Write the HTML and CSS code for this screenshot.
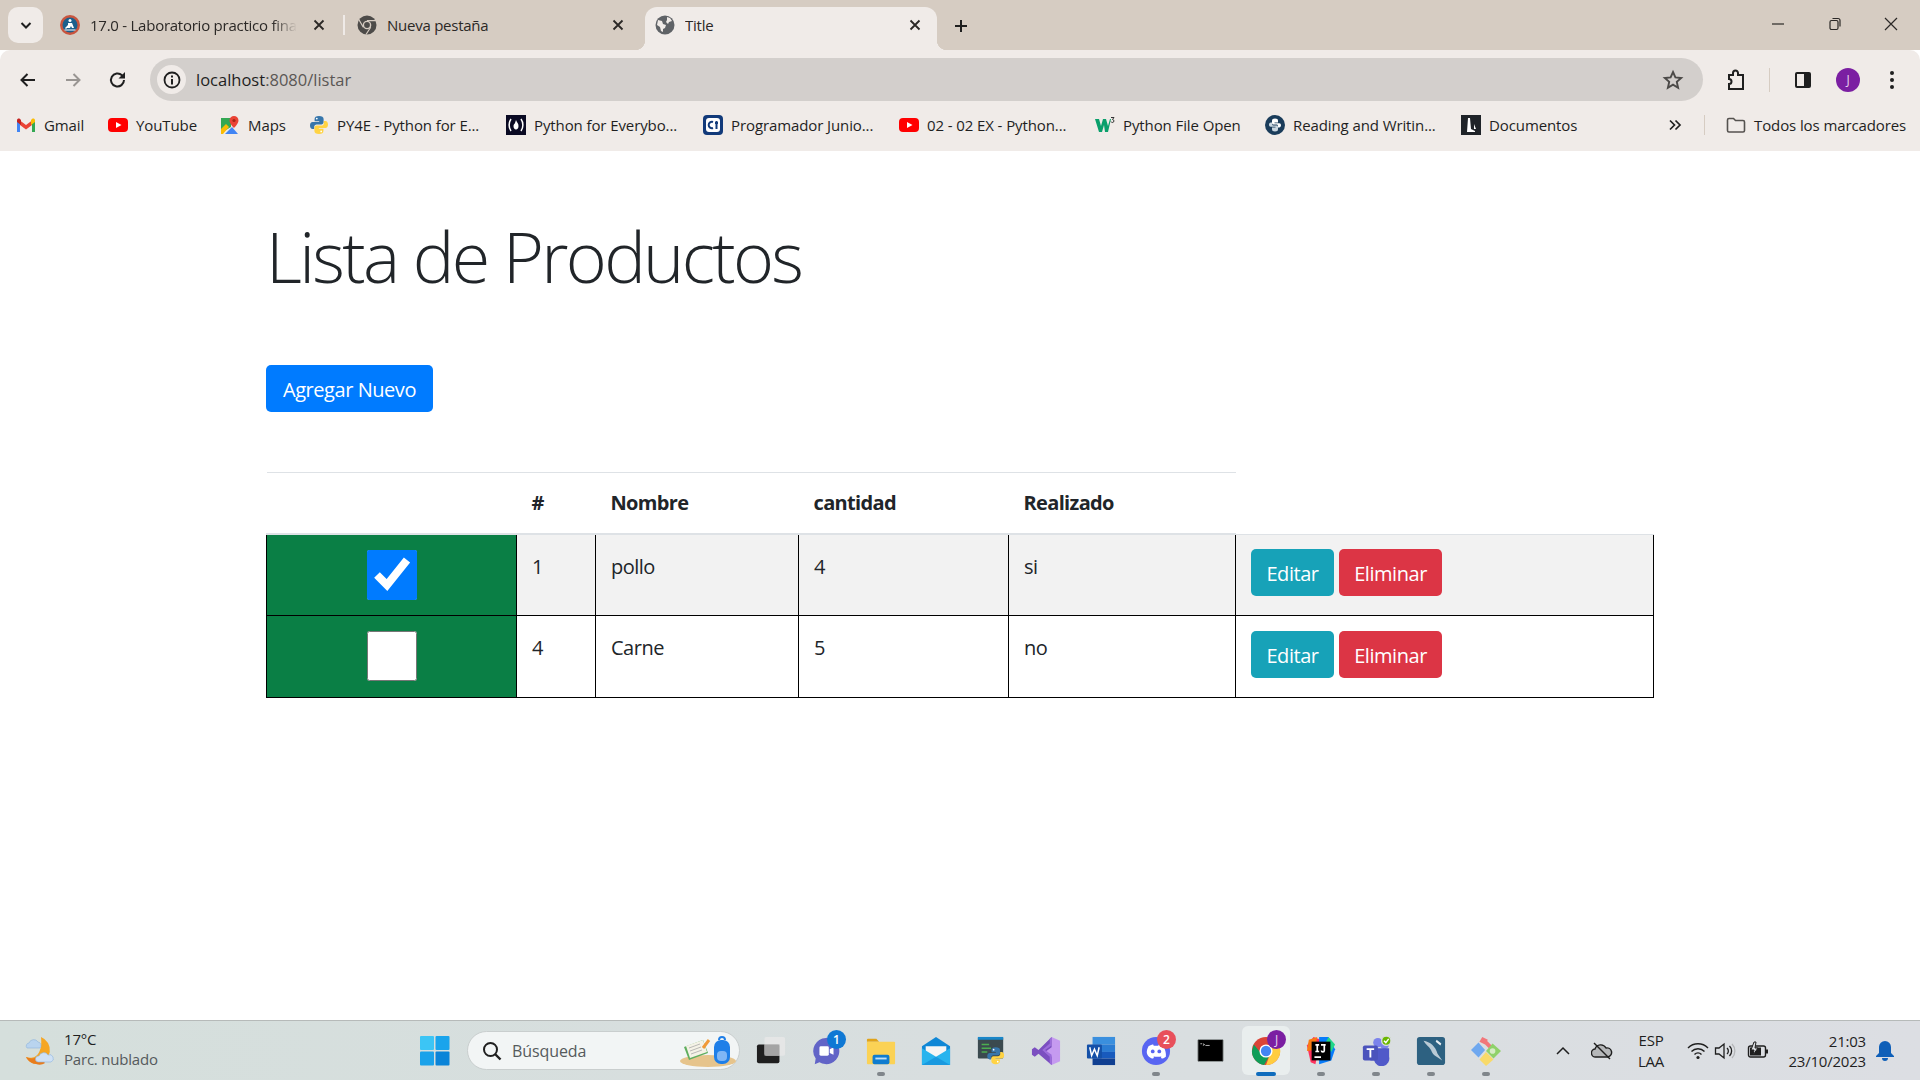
FILE: index.html
```html
<!DOCTYPE html>
<html lang="en">
<head>
    <meta charset="UTF-8">
    <meta name="viewport" content="width=device-width, initial-scale=1.0">
    <title>Title</title>
    <link rel="stylesheet" href="styles.css">
</head>

<body>
    <svg class="defs" width="0" height="0">
        <symbol id="python" viewBox="0 0 20 20">
            <path fill="#3776ab" d="M10 1C7 1 5.6 2 5.6 4v2.2h4.6V7H3.6C2 7 1 8.4 1 10.4S2 14 3.6 14h1.6v-2.2c0-1.4 1-2.4 2.4-2.4h4.8c1.2 0 2.2-1 2.2-2.2V4C14.600 2 13 1 10 1z"/>
            <path fill="#ffd343" d="M10 19c3 0 4.400-1 4.400-3v-2.200H9.800V13h6.600c1.600 0 2.600-1.400 2.600-3.400S18 6 16.400 6h-1.600v2.200c0 1.400-1 2.400-2.400 2.400H7.600c-1.200 0-2.200 1-2.200 2.200V16c0 2 1.600 3 4.600 3z"/>
            <circle cx="7.800" cy="3.600" r=".9" fill="#fff"/>
            <circle cx="12.200" cy="16.400" r=".9" fill="#fff"/>
        </symbol>
        <symbol id="youtube" viewBox="0 0 20 20">
            <rect x="0" y="3" width="20" height="14" rx="4" fill="#f00"/>
            <path fill="#fff" d="M8 7l5.500 3L8 13z"/>
        </symbol>
        <symbol id="close" viewBox="0 0 16 16">
            <path fill="none" stroke="#2b2826" stroke-width="1.800" d="M3.500 3.500l9 9M12.500 3.500l-9 9"/>
        </symbol>
    </svg>

    <div class="tabstrip">
        <div class="tab-search">
            <svg width="14" height="14" viewBox="0 0 14 14"><path fill="none" stroke="#1f1f1f" stroke-width="2" d="M2.500 5l4.500 4.500L11.500 5"/></svg>
        </div>
        <div class="tab tab-first">
            <svg class="favicon" viewBox="0 0 20 20">
                <circle cx="10" cy="10" r="10" fill="#c8553f"/>
                <circle cx="10" cy="10" r="7.500" fill="#1d5f8c"/>
                <circle cx="10" cy="5.500" r="1.500" fill="#fff"/>
                <path fill="#fff" d="M8 8h4l2 5h-2l-1-2-1 2H7l-1 1-1-1 3-3zM4.500 14.500h11v1h-11z"/>
            </svg>
            <span class="tab-title tab-title-fade">17.0 - Laboratorio practico fina</span>
            <svg class="tab-close"><use href="#close"/></svg>
        </div>
        <div class="tab-divider"></div>
        <div class="tab tab-second">
            <svg class="favicon" viewBox="0 0 20 20">
                <circle cx="10" cy="10" r="9.500" fill="#4d4b49"/>
                <circle cx="10" cy="10" r="4.300" fill="#d6ccc2"/>
                <circle cx="10" cy="10" r="2.900" fill="#4d4b49"/>
                <path fill="none" stroke="#d6ccc2" stroke-width="1.200" d="M10 5.700h9M6.300 12.200L1.800 4.500M13.700 12.200L9 19.500"/>
            </svg>
            <span class="tab-title">Nueva pestaña</span>
            <svg class="tab-close"><use href="#close"/></svg>
        </div>
        <div class="tab tab-active">
            <svg class="favicon" viewBox="0 0 20 20">
                <circle cx="10" cy="10" r="9.500" fill="#5f6266"/>
                <path fill="#f0ebe8" d="M3 5l4 1 1 3 3 1-1 3-2 1v3l-2-1-1-4-3-2zM12 2l3 1 2 3-3 1-1 2-2-2 1-2z"/>
            </svg>
            <span class="tab-title">Title</span>
            <svg class="tab-close"><use href="#close"/></svg>
        </div>
        <div class="tab-new">
            <svg width="14" height="14" viewBox="0 0 14 14"><path stroke="#1f1f1f" stroke-width="2" d="M7 1v12M1 7h12"/></svg>
        </div>
        <div class="window-controls">
            <svg width="14" height="14" viewBox="0 0 14 14"><path stroke="#2b2826" stroke-width="1.200" d="M1 7h12"/></svg>
            <svg width="14" height="14" viewBox="0 0 14 14"><rect x="2" y="3.500" width="8" height="9" rx="1.500" fill="none" stroke="#2b2826" stroke-width="1.200"/><path fill="none" stroke="#2b2826" stroke-width="1.200" d="M4.500 1.500h5.500a2 2 0 0 1 2 2v6"/></svg>
            <svg width="14" height="14" viewBox="0 0 14 14"><path stroke="#2b2826" stroke-width="1.200" d="M1 1l12 12M13 1L1 13"/></svg>
        </div>
    </div>

    <div class="toolbar">
        <button class="nav-btn">
            <svg width="20" height="20" viewBox="0 0 20 20"><path fill="none" stroke="#1f1f1f" stroke-width="2" d="M17 10H4M9.500 4l-6 6 6 6"/></svg>
        </button>
        <button class="nav-btn">
            <svg width="20" height="20" viewBox="0 0 20 20"><path fill="none" stroke="#999592" stroke-width="2" d="M3 10h13M10.500 4l6 6-6 6"/></svg>
        </button>
        <button class="nav-btn">
            <svg width="20" height="20" viewBox="0 0 20 20"><path fill="none" stroke="#1f1f1f" stroke-width="2" d="M16 10a6.500 6.500 0 1 1-2-4.700L16 7"/><path fill="#1f1f1f" d="M17 2v6.500h-6.500z"/></svg>
        </button>
        <div class="omnibox">
            <div class="site-info">
                <svg width="18" height="18" viewBox="0 0 18 18"><circle cx="9" cy="9" r="7.500" fill="none" stroke="#1f1f1f" stroke-width="1.800"/><path stroke="#1f1f1f" stroke-width="2" d="M9 8v5.500M9 4.500v2"/></svg>
            </div>
            <span class="url">localhost<span class="url-path">:8080/listar</span></span>
            <svg class="star" width="22" height="22" viewBox="0 0 22 22"><path fill="none" stroke="#4c4a48" stroke-width="1.900" d="M11 3l2.400 5.400 5.800.6-4.400 3.900 1.300 5.800-5.100-3-5.100 3 1.300-5.800L2.800 9l5.800-.6z"/></svg>
        </div>
        <div class="toolbar-btn">
            <svg width="22" height="22" viewBox="0 0 22 22"><path fill="none" stroke="#1f1f1f" stroke-width="2" d="M4 6h4V4a2.500 2.500 0 0 1 5 0v2h5v14H4v-5a2.500 2.500 0 0 0 0-5z"/></svg>
        </div>
        <div class="toolbar-sep"></div>
        <div class="toolbar-btn">
            <svg width="20" height="20" viewBox="0 0 20 20"><rect x="2" y="2" width="16" height="16" rx="2" fill="#1f1f1f"/><rect x="4" y="4" width="7" height="12" fill="#f0ebe8"/></svg>
        </div>
        <div class="avatar">J</div>
        <div class="toolbar-menu">
            <svg width="6" height="20" viewBox="0 0 6 20"><circle cx="3" cy="3" r="2" fill="#1f1f1f"/><circle cx="3" cy="10" r="2" fill="#1f1f1f"/><circle cx="3" cy="17" r="2" fill="#1f1f1f"/></svg>
        </div>
    </div>

    <div class="bookmarks">
        <div class="bookmark">
            <svg class="bm-icon" viewBox="0 0 20 20">
                <path fill="#4285f4" d="M1 17V5l3 1.500V17z"/>
                <path fill="#34a853" d="M16 17V6.500L19 5v12z"/>
                <path fill="#ea4335" d="M4 10V5.500L10 10l6-4.500V10l-6 4.500z"/>
                <path fill="#c5221f" d="M1 5.500C1 3.500 3 3 4 4l1 1v5L1 7z"/>
                <path fill="#fbbc04" d="M19 5.500c0-2-2-2.500-3-1.500l-1 1v5l4-3z"/>
            </svg>
            <span>Gmail</span>
        </div>
        <div class="bookmark"><svg class="bm-icon"><use href="#youtube"/></svg><span>YouTube</span></div>
        <div class="bookmark">
            <svg class="bm-icon" viewBox="0 0 20 20">
                <path fill="#34a853" d="M1 3h10v9L1 18z"/>
                <path fill="#4285f4" d="M5 19l7-7 6 7z"/>
                <path fill="#fbbc04" d="M1 14l5-5 3 3-6 7H1z"/>
                <path fill="#ea4335" d="M14 1a4.500 4.500 0 0 1 4.500 4.500c0 3-4.500 7.500-4.500 7.500S9.500 8.500 9.500 5.500A4.500 4.500 0 0 1 14 1z"/>
                <circle cx="14" cy="5.500" r="1.600" fill="#a52714"/>
            </svg>
            <span>Maps</span>
        </div>
        <div class="bookmark"><svg class="bm-icon"><use href="#python"/></svg><span>PY4E - Python for E...</span></div>
        <div class="bookmark">
            <svg class="bm-icon" viewBox="0 0 20 20">
                <rect width="20" height="20" fill="#0a0a23"/>
                <path fill="none" stroke="#fff" stroke-width="1.500" d="M5 4c-2.500 3.500-2.500 8.500 0 12M15 4c2.500 3.500 2.500 8.500 0 12"/>
                <path fill="#fff" d="M10 5c1 2.500 2.500 3.500 2.500 6 0 2-1 3.500-2.500 3.500S7.500 13 7.500 11c0-1.500 1-2 1.500-3z"/>
            </svg>
            <span>Python for Everybo...</span>
        </div>
        <div class="bookmark">
            <svg class="bm-icon" viewBox="0 0 20 20">
                <rect width="20" height="20" rx="4" fill="#123a7a"/>
                <rect x="3" y="3" width="14" height="14" rx="3" fill="#fff"/>
                <path fill="none" stroke="#123a7a" stroke-width="2" d="M10 7a3.200 3.200 0 1 0 0 6M13.500 6v8M12 8h3"/>
            </svg>
            <span>Programador Junio...</span>
        </div>
        <div class="bookmark"><svg class="bm-icon"><use href="#youtube"/></svg><span>02 - 02 EX - Python...</span></div>
        <div class="bookmark">
            <svg class="bm-icon" viewBox="0 0 20 20">
                <path fill="#0a9f6b" d="M0 4h4l2 7 2-7h3l2 7 2-7h1l-3 13h-3L9 10l-2 7H4z"/>
                <path fill="none" stroke="#333" stroke-width="1" d="M16 2.500h3l-1.500 2a1.500 1.500 0 1 1-1.500 2"/>
            </svg>
            <span>Python File Open</span>
        </div>
        <div class="bookmark">
            <svg class="bm-icon" viewBox="0 0 20 20">
                <circle cx="10" cy="10" r="10" fill="#1a3c5a"/>
                <path fill="#fff" d="M10 3.500c2 0 3 .8 3 2.200v1.800H9.500v.8h4.800c1 0 1.700.8 1.700 2s-.7 2.200-1.700 2.200H13V11c0-.9-.6-1.500-1.500-1.500h-3c-1 0-1.500-.7-1.500-1.500V5.700c0-1.400 1-2.200 3-2.200z"/>
                <path fill="#c9d6e0" d="M10 16.500c-2 0-3-.8-3-2.200v-1.800h3.500v-.8H5.700c-1 0-1.700-.8-1.700-2s.7-2.200 1.700-2.200H7V9c0 .9.600 1.500 1.500 1.500h3c1 0 1.500.7 1.500 1.500v2.300c0 1.400-1 2.200-3 2.200z"/>
            </svg>
            <span>Reading and Writin...</span>
        </div>
        <div class="bookmark">
            <svg class="bm-icon" viewBox="0 0 20 20">
                <rect width="20" height="20" fill="#1f2328"/>
                <path fill="#fff" d="M7 3h2l1 11 4 2v1H6zM13 9l2 5h-2z"/>
            </svg>
            <span>Documentos</span>
        </div>
        <div class="bm-more">
            <svg width="14" height="14" viewBox="0 0 14 14"><path fill="none" stroke="#1f1f1f" stroke-width="1.700" d="M2 2.500L6.500 7 2 11.500M7.500 2.500L12 7l-4.500 4.500"/></svg>
        </div>
        <div class="bm-sep"></div>
        <div class="bookmark bm-all">
            <svg class="bm-icon" viewBox="0 0 20 20"><path fill="none" stroke="#55524f" stroke-width="1.600" d="M1.500 5a1.500 1.500 0 0 1 1.500-1.500h4.500l2 2H17A1.500 1.500 0 0 1 18.500 7v8.500A1.500 1.500 0 0 1 17 17H3a1.500 1.500 0 0 1-1.500-1.500z"/></svg>
            <span>Todos los marcadores</span>
        </div>
    </div>

    <main class="page">
        <h1 class="page-title">Lista de Productos</h1>
        <a class="btn btn-primary btn-add">Agregar Nuevo</a>

        <table class="products">
            <colgroup>
                <col class="col-check">
                <col class="col-id">
                <col class="col-name">
                <col class="col-qty">
                <col class="col-done">
                <col>
            </colgroup>
            <thead>
                <tr>
                    <th></th>
                    <th>#</th>
                    <th>Nombre</th>
                    <th>cantidad</th>
                    <th>Realizado</th>
                    <td class="head-empty"></td>
                </tr>
            </thead>
            <tbody>
                <tr class="row-odd">
                    <td class="cell-check"><input type="checkbox" checked></td>
                    <td>1</td>
                    <td>pollo</td>
                    <td>4</td>
                    <td>si</td>
                    <td class="cell-actions">
                        <div class="actions">
                            <a class="btn btn-info">Editar</a>
                            <a class="btn btn-danger">Eliminar</a>
                        </div>
                    </td>
                </tr>
                <tr>
                    <td class="cell-check"><input type="checkbox"></td>
                    <td>4</td>
                    <td>Carne</td>
                    <td>5</td>
                    <td>no</td>
                    <td class="cell-actions">
                        <div class="actions">
                            <a class="btn btn-info">Editar</a>
                            <a class="btn btn-danger">Eliminar</a>
                        </div>
                    </td>
                </tr>
            </tbody>
        </table>
    </main>

    <footer class="taskbar">
        <div class="weather">
            <svg width="34" height="34" viewBox="0 0 34 34">
                <path fill="#f5a623" d="M17 3a14 14 0 0 1-4 27C8 30 4 27 2 23c8 3 17-2 15-20z"/>
                <path fill="#e87d1e" d="M2 23c4 2 9 2 13-1l6 7c-3 2-6 2-9 1-4 0-8-3-10-7z"/>
                <path fill="#b9d4ef" stroke="#8fb4dc" stroke-width=".6" d="M3 14a3 3 0 0 1 2-5 5 5 0 0 1 9-1 3.500 3.500 0 0 1 2 6z"/>
                <path fill="#cfe1f5" stroke="#8fb4dc" stroke-width=".6" d="M14 28a3 3 0 0 1 1-6 5 5 0 0 1 9-1 3.500 3.500 0 0 1 3 7z"/>
            </svg>
            <div class="weather-text">
                <span class="weather-temp">17°C</span>
                <span class="weather-desc">Parc. nublado</span>
            </div>
        </div>

        <div class="start">
            <svg width="30" height="30" viewBox="0 0 30 30">
                <rect x="0" y="0" width="14" height="14" rx="1" fill="#3cc5f5"/>
                <rect x="15.500" y="0" width="14" height="14" rx="1" fill="#19a4ec"/>
                <rect x="0" y="15.500" width="14" height="14" rx="1" fill="#1aa2ea"/>
                <rect x="15.500" y="15.500" width="14" height="14" rx="1" fill="#0a84d8"/>
            </svg>
        </div>

        <div class="search">
            <svg width="20" height="20" viewBox="0 0 20 20"><circle cx="8.500" cy="8.500" r="6.500" fill="none" stroke="#1f1f1f" stroke-width="2"/><path stroke="#1f1f1f" stroke-width="2.400" d="M13 13l5.500 5.500"/></svg>
            <span class="search-text">Búsqueda</span>
            <svg class="search-art" width="58" height="34" viewBox="0 0 58 34">
                <ellipse cx="30" cy="27" rx="28" ry="6" fill="#e6c48c"/>
                <path fill="#5fae5f" d="M6 13l19-7 5 13-19 7z"/>
                <path fill="#f4f2e6" d="M8 12l17-6 4 12-17 6z"/>
                <path stroke="#aaa" stroke-width=".8" d="M11 14l11-4M12 17l11-4M13 20l11-4"/>
                <path stroke="#f09a37" stroke-width="3" d="M25 14l6-8"/>
                <rect x="36" y="6" width="16" height="24" rx="7" fill="#1f7fe8"/>
                <rect x="39" y="17" width="10" height="10" rx="4" fill="#7fb6f5"/>
                <path fill="none" stroke="#1f7fe8" stroke-width="2" d="M41 6a3 3 0 0 1 6 0"/>
            </svg>
        </div>

        <div class="task-icons">
            <div class="task-cell">
                <svg class="task-icon" viewBox="0 0 32 32">
                    <rect x="1" y="9" width="24" height="20" rx="2" fill="#1f1f1f"/>
                    <rect x="9" y="1" width="22" height="20" rx="2" fill="#e8e8e8" opacity=".85"/>
                    <rect x="9" y="9" width="16" height="12" fill="#9b9b9b" opacity=".8"/>
                </svg>
            </div>
            <div class="task-cell">
                <svg class="task-icon" viewBox="0 0 32 32">
                    <path fill="#6264c7" d="M16 2a14 14 0 1 1-7 26l-5 2 1-6A14 14 0 0 1 16 2z"/>
                    <rect x="9" y="11" width="10" height="10" rx="1.500" fill="#fff"/>
                    <path fill="#fff" d="M20 14l4-2v8l-4-2z"/>
                </svg>
                <span class="badge badge-blue">1</span>
            </div>
            <div class="task-cell">
                <svg class="task-icon" viewBox="0 0 32 32">
                    <path fill="#e0a31a" d="M1 4a1 1 0 0 1 1-1h9l3 3h-13z"/>
                    <rect x="1" y="6" width="30" height="24" rx="1" fill="#fbd255"/>
                    <rect x="7" y="20" width="18" height="10" rx="2" fill="#0f7ccf"/>
                    <rect x="10" y="23" width="12" height="2" fill="#bfe0f7"/>
                </svg>
                <span class="task-dot"></span>
            </div>
            <div class="task-cell">
                <svg class="task-icon" viewBox="0 0 32 32">
                    <path fill="#0f87d6" d="M1 11L16 1l15 10v20H1z"/>
                    <path fill="#f5f5f5" d="M5 11h22v6l-11 6-11-6z"/>
                    <path fill="#28b4ee" d="M1 13l15 9 15-9v18H1z"/>
                    <path fill="#0f87d6" d="M1 31l15-9 15 9z" opacity=".6"/>
                </svg>
            </div>
            <div class="task-cell">
                <svg class="task-icon" viewBox="0 0 32 32">
                    <rect x="2" y="1" width="27" height="23" rx="1" fill="#3b4a4f"/>
                    <rect x="2" y="1" width="27" height="3" fill="#1a86c8"/>
                    <path stroke="#4caf50" stroke-width="1.500" d="M6 9h8M6 13h10M6 17h6"/>
                    <svg x="11" y="11" width="20" height="20" viewBox="0 0 20 20"><use href="#python"/></svg>
                </svg>
            </div>
            <div class="task-cell">
                <svg class="task-icon" viewBox="0 0 32 32">
                    <path fill="#c59af0" d="M22 1l9 4v22l-9 4-12-12 12-9z"/>
                    <path fill="#7b4fc0" d="M22 1L8 15l-4-3-3 2v6l3 2 4-3 14 12v-9l-7-5 7-5z"/>
                    <path fill="#9c6cdb" d="M22 1v9l-7 5 7 5v11l-2-2V22l-8-7 8-7V3z"/>
                </svg>
            </div>
            <div class="task-cell">
                <svg class="task-icon" viewBox="0 0 32 32">
                    <rect x="7" y="1" width="24" height="8" fill="#3a8fde"/>
                    <rect x="7" y="9" width="24" height="8" fill="#2b7cd3"/>
                    <rect x="7" y="17" width="24" height="7" fill="#185abd"/>
                    <rect x="7" y="24" width="24" height="7" fill="#103f91"/>
                    <rect x="1" y="9" width="16" height="15" rx="1" fill="#1450a8"/>
                    <path fill="none" stroke="#fff" stroke-width="1.600" d="M4 12l2 9 3-7 3 7 2-9"/>
                </svg>
            </div>
            <div class="task-cell">
                <svg class="task-icon" viewBox="0 0 32 32">
                    <circle cx="16" cy="16" r="15" fill="#5865f2"/>
                    <path fill="#fff" d="M8 11c2-1.500 4-2 5-2l.6 1.300h4.800L19 9c1 0 3 .5 5 2 2 4 3 8 2.500 11-1.500 1.300-3.500 2-4.500 2l-1-1.800 1.500-1c-3 1.300-7 1.300-10 0l1.500 1-1 1.800c-1 0-3-.7-4.500-2C5 19 6 15 8 11z"/>
                    <circle cx="12.500" cy="16.500" r="2" fill="#5865f2"/>
                    <circle cx="19.500" cy="16.500" r="2" fill="#5865f2"/>
                </svg>
                <span class="badge badge-red">2</span>
                <span class="task-dot"></span>
            </div>
            <div class="task-cell">
                <svg class="task-icon task-icon-small" viewBox="0 0 32 32">
                    <rect x="1" y="3" width="30" height="26" rx="1" fill="#000" stroke="#9aa0a0"/>
                    <path stroke="#d0d0d0" d="M4 8h2M7 8l2 1-2 1M10 10h5"/>
                </svg>
            </div>
            <div class="task-cell task-cell-active">
                <svg class="task-icon" viewBox="0 0 32 32">
                    <circle cx="16" cy="16" r="15" fill="#db4437"/>
                    <path fill="#0f9d58" d="M3 9L1 16a15 15 0 0 0 13 15l5-9-6-1z"/>
                    <path fill="#ffcd40" d="M30 10H16l6 5-6 16a15 15 0 0 0 14-21z"/>
                    <circle cx="16" cy="16" r="7" fill="#fff"/>
                    <circle cx="16" cy="16" r="5.500" fill="#4285f4"/>
                </svg>
                <span class="badge badge-user">J</span>
                <span class="task-bar"></span>
            </div>
            <div class="task-cell">
                <svg class="task-icon" viewBox="0 0 32 32">
                    <path fill="#fe315d" d="M1 10l7-9 8 3-6 26-5-2z"/>
                    <path fill="#f97a12" d="M3 4l9-3-3 14-8 1z"/>
                    <path fill="#087cfa" d="M14 1h10l7 13-4 12-13 4z"/>
                    <path fill="#21d789" d="M24 1l7 8-4 8-6-10z"/>
                    <rect x="6" y="6" width="20" height="20" fill="#000"/>
                    <path stroke="#fff" stroke-width="1.800" d="M10 9.500h4M12 9.500v7M10 16.500h4M16 9.500h5M19.500 9.500v6a1.500 1.500 0 0 1-3 0M9 22.500h7"/>
                </svg>
                <span class="task-dot"></span>
            </div>
            <div class="task-cell">
                <svg class="task-icon" viewBox="0 0 32 32">
                    <circle cx="25" cy="9" r="5" fill="#7b83eb"/>
                    <circle cx="18" cy="7" r="5" fill="#7b83eb"/>
                    <path fill="#5059c9" d="M10 13h20v9a8 8 0 0 1-16 4h-4z"/>
                    <rect x="2" y="10" width="16" height="16" rx="2" fill="#4b53bc"/>
                    <path stroke="#fff" stroke-width="2" d="M6 14h8M10 14v9"/>
                    <circle cx="27" cy="5" r="5" fill="#6bb700" stroke="#d8dcdc" stroke-width="1.500"/>
                    <path fill="none" stroke="#fff" stroke-width="1.500" d="M24.500 5l2 2 3-4"/>
                </svg>
                <span class="task-dot"></span>
            </div>
            <div class="task-cell">
                <svg class="task-icon" viewBox="0 0 32 32">
                    <rect x="1" y="1" width="30" height="30" rx="3" fill="#2d6181"/>
                    <path fill="#e8eef2" d="M8 5c7 1 13 6 15 14l5 7-6-4c-3-1-5-4-6-7C14 11 10 9 8 5z" opacity=".75"/>
                    <path fill="#e8eef2" d="M22 4l5 4-1 2-5-4z"/>
                </svg>
                <span class="task-dot"></span>
            </div>
            <div class="task-cell">
                <svg class="task-icon" viewBox="0 0 32 32">
                    <path fill="#f2767a" d="M12 1l6 3-3 5-6-3zM17 5l5 5-3 3-5-5z"/>
                    <path fill="#6fa8ef" d="M8 7l7 8-7 8-8-8z"/>
                    <path fill="#8fd16a" d="M23 8l9 8-8 8-8-8z"/>
                    <circle cx="23" cy="16" r="3" fill="#d6ecc6"/>
                    <path fill="#f8da6a" d="M16 17l8 8-8 7-7-7z"/>
                </svg>
                <span class="task-dot"></span>
            </div>
        </div>

        <div class="tray">
            <svg class="tray-chevron" width="16" height="16" viewBox="0 0 16 16"><path fill="none" stroke="#1f1f1f" stroke-width="1.500" d="M2 11l6-6 6 6"/></svg>
            <svg class="tray-cloud" width="22" height="22" viewBox="0 0 22 22"><path fill="#b5b7b9" stroke="#1f1f1f" stroke-width="1.400" d="M5 17a4 4 0 0 1-1-8 6 6 0 0 1 11-1 4.500 4.500 0 0 1 2 9z"/><path stroke="#1f1f1f" stroke-width="1.400" d="M3 3l16 16"/></svg>
            <div class="tray-lang"><span>ESP</span><span>LAA</span></div>
            <svg class="tray-wifi" width="22" height="20" viewBox="0 0 22 20"><path fill="none" stroke="#1f1f1f" stroke-width="1.400" d="M1 7a14 14 0 0 1 20 0M4.500 10.500a9 9 0 0 1 13 0M7.500 13.500a5 5 0 0 1 7 0"/><circle cx="11" cy="16.500" r="1.600" fill="#1f1f1f"/></svg>
            <svg class="tray-sound" width="22" height="20" viewBox="0 0 22 20"><path fill="none" stroke="#1f1f1f" stroke-width="1.300" d="M1.500 7v6h3.500l5 4V3l-5 4zM13 7a4 4 0 0 1 0 6M15.500 5a7 7 0 0 1 0 10"/><path fill="none" stroke="#b4b6b8" stroke-width="1.300" d="M18 3a10 10 0 0 1 0 14"/></svg>
            <svg class="tray-battery" width="22" height="20" viewBox="0 0 22 20"><rect x="1.500" y="5" width="17" height="11" rx="2" fill="none" stroke="#1f1f1f" stroke-width="1.400"/><rect x="3" y="6.500" width="11" height="8" fill="#1f1f1f"/><rect x="19" y="8.500" width="2" height="4" fill="#1f1f1f"/><path fill="#dcdee2" stroke="#1f1f1f" d="M7 1L4 9h3l-1 5 5-7H8l1-6z"/></svg>
            <div class="tray-clock"><span>21:03</span><span>23/10/2023</span></div>
            <svg class="tray-bell" width="18" height="22" viewBox="0 0 18 22"><path fill="#0f5fb8" d="M9 1a6 6 0 0 1 6 6v6l3 3v1H0v-1l3-3V7a6 6 0 0 1 6-6zM6 18h6a3 3 0 0 1-6 0z"/></svg>
        </div>
    </footer>
</body>
</html>
```

FILE: styles.css
```css
* {
    box-sizing: border-box;
}

body, html {
    margin: 0;
    padding: 0;
    height: 100%;
    overflow: hidden;
    font-family: "Open Sans", Arial, sans-serif;
    background-color: #ffffff;
    color: #212529;
}

body {
    display: flex;
    flex-direction: column;
    height: 1080px;
}

.defs {
    position: absolute;
}

/* browser tabs */
.tabstrip {
    display: flex;
    align-items: flex-end;
    height: 50px;
    flex-shrink: 0;
    padding-left: 8px;
    background-color: #d6ccc2;
    font-size: 15px;
    letter-spacing: -0.25px;
    color: #2b2826;
}

.tab-search {
    display: flex;
    align-items: center;
    justify-content: center;
    width: 35px;
    height: 36px;
    margin: 0 7px 7px 0;
    background-color: #f0ebe8;
    border-radius: 10px;
}

.tab {
    display: flex;
    align-items: center;
    height: 43px;
    padding: 0 16px 7px 10px;
}

.tab-first {
    width: 293px;
}

.tab-second {
    width: 300px;
    padding-left: 12px;
    padding-right: 19px;
}

.tab-active {
    position: relative;
    width: 292px;
    padding-right: 14px;
    background-color: #f0ebe8;
    border-radius: 12px 12px 0 0;
}

.tab-active::before,
.tab-active::after {
    content: "";
    position: absolute;
    bottom: 0;
    width: 10px;
    height: 10px;
}

.tab-active::before {
    left: -10px;
    background: radial-gradient(circle at 0 0, #d6ccc2 10px, #f0ebe8 10.5px);
}

.tab-active::after {
    right: -10px;
    background: radial-gradient(circle at 100% 0, #d6ccc2 10px, #f0ebe8 10.5px);
}

.tab-divider {
    width: 2px;
    height: 20px;
    margin-bottom: 15px;
    background-color: #efeae7;
}

.favicon {
    width: 20px;
    height: 20px;
    flex-shrink: 0;
    margin-right: 10px;
}

.tab-title {
    flex: 1;
    overflow: hidden;
    white-space: nowrap;
    margin-right: 14px;
}

.tab-title-fade {
    -webkit-mask-image: linear-gradient(to right, #000 88%, transparent 100%);
    mask-image: linear-gradient(to right, #000 88%, transparent 100%);
}

.tab-close {
    width: 16px;
    height: 16px;
    flex-shrink: 0;
}

.tab-new {
    display: flex;
    align-items: center;
    justify-content: center;
    width: 48px;
    height: 43px;
    padding-bottom: 6px;
}

.window-controls {
    display: flex;
    justify-content: space-between;
    width: 127px;
    height: 50px;
    margin-left: auto;
    margin-right: 22px;
    padding-top: 17px;
}

/* address bar */
.toolbar {
    display: flex;
    align-items: center;
    height: 52px;
    flex-shrink: 0;
    padding: 7px 0 0 5px;
    background-color: #f0ebe8;
    border-radius: 10px 10px 0 0;
}

.nav-btn {
    display: flex;
    align-items: center;
    justify-content: center;
    width: 45px;
    height: 40px;
    padding: 0;
    border: none;
    background: none;
}

.omnibox {
    display: flex;
    align-items: center;
    flex: 1;
    height: 43px;
    margin-left: 10px;
    padding: 0 19px 0 7px;
    background-color: #d3cfcc;
    border-radius: 22px;
    font-size: 16.5px;
}

.site-info {
    display: flex;
    align-items: center;
    justify-content: center;
    width: 29px;
    height: 29px;
    margin-right: 10px;
    background-color: #f0ebe8;
    border-radius: 50%;
}

.url {
    color: #1f1f1f;
}

.url-path {
    color: #5a5755;
}

.star {
    margin-left: auto;
}

.toolbar-btn {
    display: flex;
    align-items: center;
    justify-content: center;
    width: 66px;
}

.toolbar-sep {
    width: 1px;
    height: 24px;
    background-color: #d6ccc2;
}

.avatar {
    display: flex;
    align-items: center;
    justify-content: center;
    width: 24px;
    height: 24px;
    background-color: #7b1fa2;
    border-radius: 50%;
    color: #e8d5ef;
    font-size: 12px;
}

.toolbar-menu {
    display: flex;
    justify-content: center;
    width: 60px;
    padding-left: 4px;
}

/* bookmarks */
.bookmarks {
    display: grid;
    grid-template-columns: 92px 112px 89px 197px 197px 196px 196px 170px 196px 207px 36px 22px auto;
    align-items: center;
    height: 49px;
    flex-shrink: 0;
    padding: 0 0 3px 16px;
    background-color: #f0ebe8;
    font-size: 15px;
    letter-spacing: -0.1px;
    color: #1f1f1f;
}

.bookmark {
    display: flex;
    align-items: center;
    gap: 8px;
    white-space: nowrap;
}

.bm-icon {
    width: 20px;
    height: 20px;
    flex-shrink: 0;
}

.bm-more {
    display: flex;
    align-items: center;
}

.bm-sep {
    width: 1px;
    height: 20px;
    background-color: #d6ccc2;
}

/* page content */
.page {
    flex: 1;
    padding: 63px 0 0 266px;
    overflow: hidden;
}

.page-title {
    margin: 0 0 67px 0;
    font-size: 70px;
    font-weight: 300;
    line-height: 84px;
    letter-spacing: -2.7px;
}

.btn {
    display: inline-block;
    height: 47px;
    line-height: 49px;
    border-radius: 5px;
    font-size: 20px;
    letter-spacing: -0.45px;
    text-align: center;
    color: #ffffff;
}

.btn-primary {
    background-color: #007bff;
}

.btn-info {
    width: 83px;
    background-color: #17a2b8;
}

.btn-danger {
    width: 103px;
    background-color: #dc3545;
}

.btn-add {
    display: block;
    width: 167px;
    margin-bottom: 60px;
}

.products {
    width: 1388px;
    table-layout: fixed;
    border-collapse: collapse;
    font-size: 20px;
    letter-spacing: -0.5px;
    line-height: 30px;
}

.col-check {
    width: 250px;
}

.col-id {
    width: 79px;
}

.col-name {
    width: 203px;
}

.col-qty {
    width: 210px;
}

.col-done {
    width: 227px;
}

.products th {
    padding: 15px;
    text-align: left;
    font-weight: 700;
    letter-spacing: -0.65px;
    border-top: 1px solid #dee2e6;
    border-bottom: 2px solid #dee2e6;
}

.products .head-empty {
    border: none;
    border-bottom: 1px solid #dee2e6;
}

.products tbody tr {
    height: 81.5px;
}

.products td {
    padding: 16.5px 15px 15px;
    vertical-align: top;
    border: 1px solid #000000;
}

.row-odd {
    background-color: #f2f2f2;
}

.products .cell-actions {
    padding-top: 14.5px;
}

.products .cell-check {
    background-color: #0a7f45;
    text-align: center;
    padding-top: 14.5px;
    padding-bottom: 0;
}

.cell-check input {
    display: block;
    width: 50px;
    height: 50px;
    margin: 0 auto;
    accent-color: #007bff;
}

.actions {
    display: flex;
    gap: 5px;
}

/* windows taskbar */
.taskbar {
    display: flex;
    align-items: center;
    height: 60px;
    flex-shrink: 0;
    border-top: 1px solid #b6bab9;
    background: linear-gradient(to right, #d5dfdc, #d8dedf 50%, #dcdee3);
    font-size: 15px;
    letter-spacing: -0.2px;
    color: #1f1f1f;
}

.weather {
    display: flex;
    align-items: center;
    gap: 6px;
    width: 420px;
    padding-left: 24px;
}

.weather-text {
    display: flex;
    flex-direction: column;
    line-height: 20px;
    padding-bottom: 3px;
}

.weather-desc {
    color: #555a5c;
}

.start {
    display: flex;
    width: 47px;
}

.search {
    display: flex;
    align-items: center;
    width: 273px;
    height: 39px;
    padding: 0 3px 0 14px;
    background-color: #f2f5f5;
    border: 1px solid #c9cece;
    border-radius: 20px;
}

.search-text {
    margin-left: 10px;
    font-size: 16px;
    letter-spacing: -0.1px;
    color: #555a5c;
}

.search-art {
    margin-left: auto;
}

.task-icons {
    display: flex;
    margin-left: 3px;
}

.task-cell {
    position: relative;
    display: flex;
    align-items: center;
    justify-content: center;
    width: 55px;
    height: 59px;
}

.task-icon {
    width: 30px;
    height: 30px;
}

.task-icon-small {
    width: 27px;
    height: 27px;
}

.task-cell-active::before {
    content: "";
    position: absolute;
    left: 4px;
    right: 3px;
    top: 5px;
    bottom: 5px;
    background-color: #e9eeee;
    border-radius: 6px;
}

.task-cell-active .task-icon {
    position: relative;
}

.task-dot {
    position: absolute;
    bottom: 4px;
    left: 24px;
    width: 8px;
    height: 4px;
    background-color: #80868b;
    border-radius: 2px;
}

.task-bar {
    position: absolute;
    bottom: 4px;
    left: 18px;
    width: 20px;
    height: 4px;
    background-color: #0f6cbd;
    border-radius: 2px;
}

.badge {
    position: absolute;
    display: flex;
    align-items: center;
    justify-content: center;
    top: 9px;
    right: 7px;
    width: 19px;
    height: 19px;
    border-radius: 50%;
    font-size: 12px;
    font-weight: 600;
    letter-spacing: 0;
    color: #ffffff;
}

.badge-blue {
    background-color: #0f78d4;
}

.badge-red {
    background-color: #e8505b;
}

.badge-user {
    background-color: #7b1fa2;
    color: #e8d5ef;
    font-weight: 400;
}

.tray {
    display: flex;
    align-items: center;
    margin-left: auto;
    padding-right: 26px;
}

.tray-chevron {
    margin-right: 20px;
}

.tray-cloud {
    margin-right: 19px;
}

.tray-lang {
    display: flex;
    flex-direction: column;
    align-items: center;
    width: 38px;
    line-height: 21px;
    margin-right: 17px;
}

.tray-sound {
    margin-left: 5px;
}

.tray-battery {
    margin-left: 11px;
}

.tray-clock {
    display: flex;
    flex-direction: column;
    align-items: flex-end;
    width: 97px;
    line-height: 20px;
}

.tray-bell {
    margin-left: 10px;
}
```
